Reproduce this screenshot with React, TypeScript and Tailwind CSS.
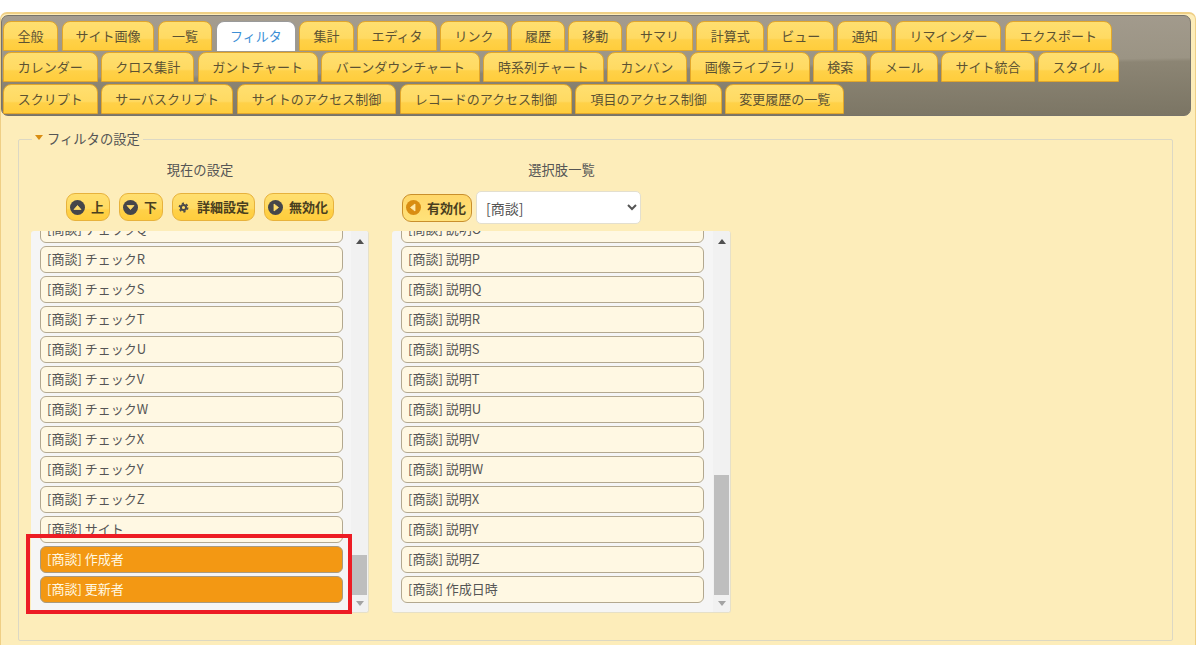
const rows = [
  [
    { label: "全般", w: "w-[55.7px]" },
    { label: "サイト画像", w: "w-[92.7px]" },
    { label: "一覧", w: "w-[54.7px]" },
    { label: "フィルタ", w: "w-[80.4px]" },
    { label: "集計", w: "w-[54.3px]" },
    { label: "エディタ", w: "w-[80px]" },
    { label: "リンク", w: "w-[67.7px]" },
    { label: "履歴", w: "w-[53.7px]" },
    { label: "移動", w: "w-[54.3px]" },
    { label: "サマリ", w: "w-[67.4px]" },
    { label: "計算式", w: "w-[67.7px]" },
    { label: "ビュー", w: "w-[66.7px]" },
    { label: "通知", w: "w-[54.7px]" },
    { label: "リマインダー", w: "w-[106px]" },
    { label: "エクスポート", w: "w-[107px]" },
  ],
  [
    { label: "カレンダー", w: "w-[95px]" },
    { label: "クロス集計", w: "w-[93.4px]" },
    { label: "ガントチャート", w: "w-[120px]" },
    { label: "バーンダウンチャート", w: "w-[159px]" },
    { label: "時系列チャート", w: "w-[120.3px]" },
    { label: "カンバン", w: "w-[80px]" },
    { label: "画像ライブラリ", w: "w-[120px]" },
    { label: "検索", w: "w-[53.7px]" },
    { label: "メール", w: "w-[67.7px]" },
    { label: "サイト統合", w: "w-[93.4px]" },
    { label: "スタイル", w: "w-[80.6px]" },
  ],
  [
    { label: "スクリプト", w: "w-[95px]" },
    { label: "サーバスクリプト", w: "w-[132.4px]" },
    { label: "サイトのアクセス制御", w: "w-[159.7px]" },
    { label: "レコードのアクセス制御", w: "w-[172.4px]" },
    { label: "項目のアクセス制御", w: "w-[146.7px]" },
    { label: "変更履歴の一覧", w: "w-[119px]" },
  ],
];

const leftItems = ["チェックQ", "チェックR", "チェックS", "チェックT", "チェックU", "チェックV", "チェックW", "チェックX", "チェックY", "チェックZ", "サイト", "作成者", "更新者"];
const rightItems = ["説明O", "説明P", "説明Q", "説明R", "説明S", "説明T", "説明U", "説明V", "説明W", "説明X", "説明Y", "説明Z", "作成日時"];

function Tab({ label, w }: { label: string; w: string }) {
  if (label === "フィルタ") {
    return (
      <div className={`${w} h-[30px] shrink-0 rounded-t-[8px] border border-b-0 border-[#9a9a9a] bg-white pt-[5px] text-center text-[#3d8fd6]`}>
        {label}
      </div>
    );
  }
  return (
    <div className={`${w} h-[30px] shrink-0 rounded-t-[8px] border border-[#e2a72a] bg-[linear-gradient(#ffdf70_0%,#ffda62_58%,#ffd148_64%,#ffcd3c_100%)] pt-[5px] text-center text-[#5c5232]`}>
      {label}
    </div>
  );
}

function CircleIcon({ dir, active }: { dir: "up" | "down" | "right" | "left"; active?: boolean }) {
  const points = {
    up: "4,9.5 11,9.5 7.5,5.5",
    down: "4,5.5 11,5.5 7.5,9.5",
    right: "6,4 6,11 10.5,7.5",
    left: "9,4 9,11 4.5,7.5",
  }[dir];
  return (
    <svg width="15" height="15" viewBox="0 0 15 15" className="shrink-0">
      <circle cx="7.5" cy="7.5" r="7.5" fill={active ? "#d98d12" : "#45464a"} />
      <polygon points={points} fill={active ? "#ffe9a8" : "#ffdc6a"} stroke={active ? "#ffe9a8" : "#ffdc6a"} strokeWidth="0.8" strokeLinejoin="round" />
    </svg>
  );
}

function GearIcon() {
  return (
    <svg width="15" height="15" viewBox="0 0 15 15" className="shrink-0">
      <circle cx="7.5" cy="7.5" r="2.6" fill="none" stroke="#4a4a4a" strokeWidth="2" />
      <circle cx="7.5" cy="7.5" r="4.2" fill="none" stroke="#4a4a4a" strokeWidth="1.5" strokeDasharray="2.2 2.2" />
    </svg>
  );
}

function ActionButton({ icon, label, active }: { icon: React.ReactNode; label: string; active?: boolean }) {
  return (
    <button
      className={`flex h-[28px] items-center gap-[6px] rounded-[9px] border-[1.5px] pr-[5px] pl-[3px] text-[13px] font-bold text-[#4a3f1e] ${
        active
          ? "border-[#c98f2c] bg-[linear-gradient(#ffd76a,#ffe27a)]"
          : "border-[#e7b23c] bg-[linear-gradient(#ffdf70_0%,#ffda62_55%,#ffd148_62%,#ffcd3c_100%)]"
      }`}
    >
      {icon}
      {label}
    </button>
  );
}

function Item({ label, selected }: { label: string; selected?: boolean }) {
  return (
    <div
      className={`flex h-[27px] w-[303px] shrink-0 items-center rounded-[6px] border-[1.5px] px-[6px] pb-[1px] text-[13px] ${
        selected
          ? "border-[#a89a80] bg-[#f39813] text-[#fff8e3]"
          : "border-[#b3a88f] bg-[#fff8e3] text-[#555555]"
      }`}
    >
      [商談] {label}
    </div>
  );
}

function ScrollList({ items, selected, width, thumbTop, thumbHeight }: { items: string[]; selected: string[]; width: string; thumbTop: string; thumbHeight: string }) {
  return (
    <div className={`flex h-[382px] ${width} overflow-hidden rounded-[3px] border-r border-b border-[#e6e0c8] bg-[#f5f5f5]`}>
      <div className="mt-[-15px] flex flex-1 flex-col gap-[3px] pl-[9px]">
        {items.map((item) => (
          <Item key={item} label={item} selected={selected.includes(item)} />
        ))}
      </div>
      <div className="flex w-[17px] flex-col items-center bg-[#f1f1f1]">
        <div className="mt-[8px] h-0 w-0 border-x-[4px] border-b-[5px] border-x-transparent border-b-[#505050]" />
        <div className={`w-[15px] bg-[#bebebe] ${thumbTop} ${thumbHeight}`} />
        <div className="mt-[6px] h-0 w-0 border-x-[4px] border-t-[5px] border-x-transparent border-t-[#a3a3a3]" />
      </div>
    </div>
  );
}

export default function App() {
  return (
    <div className="h-[645px] overflow-hidden bg-white pt-[12px] font-['Noto_Sans_CJK_JP','Noto_Sans',sans-serif] text-[13px] leading-[18px] text-[#555555]">
      <div className="h-[640px] w-[1196px] rounded-t-[7px] border-x border-t-2 border-[#efcf85] bg-[#fdedba] pt-[1px] pr-[4px]">
        <div className="h-[101px] rounded-[7px] border border-[#77736a] bg-[linear-gradient(179deg,#a59d90_0%,#9b9484_52%,#8c8574_55%,#7b7564_100%)] pt-[5px] pl-[0.7px]">
          <div className="flex flex-col gap-[1.3px]">
            {rows.map((row) => (
              <div key={row[0].label} className="flex gap-[3.3px]">
                {row.map((tab) => (
                  <Tab key={tab.label} label={tab.label} w={tab.w} />
                ))}
              </div>
            ))}
          </div>
        </div>

        <fieldset className="mt-[14px] ml-[17px] h-[511px] w-[1155px] rounded-[2px] border-[1.5px] border-[#dcd8c4] px-[12px]">
          <legend className="ml-[1px] flex items-center gap-[4px] px-[3px] text-[13.3px]">
            <span className="mb-[4px] h-0 w-0 border-x-[4.5px] border-t-[5px] border-x-transparent border-t-[#d98d12]" />
            フィルタの設定
          </legend>
          <div className="flex gap-[23px]">
            <div className="w-[338px]">
              <div className="mt-[13px] text-center text-[13.3px]">現在の設定</div>
              <div className="mt-[14px] flex h-[29px] justify-center gap-[9px]">
                <ActionButton icon={<CircleIcon dir="up" />} label="上" />
                <ActionButton icon={<CircleIcon dir="down" />} label="下" />
                <ActionButton icon={<GearIcon />} label="詳細設定" />
                <ActionButton icon={<CircleIcon dir="right" />} label="無効化" />
              </div>
              <div className="relative mt-[9px]">
                <ScrollList items={leftItems} selected={["作成者", "更新者"]} width="w-[338px]" thumbTop="mt-[311px]" thumbHeight="h-[40px]" />
                <div className="absolute top-[303px] left-[-5px] h-[80px] w-[326px] border-4 border-[#ed1c24]" />
              </div>
            </div>
            <div className="w-[339px]">
              <div className="mt-[13px] text-center text-[13.3px]">選択肢一覧</div>
              <div className="mt-[12px] flex h-[33px] items-center gap-[4px] pl-[10px]">
                <ActionButton icon={<CircleIcon dir="left" active />} label="有効化" active />
                <select className="h-[33px] w-[165px] rounded-[5px] border border-[#e3dfcf] bg-white pl-[5px] text-[14px] text-[#555555]">
                  <option>[商談]</option>
                </select>
              </div>
              <div className="mt-[7px]">
                <ScrollList items={rightItems} selected={[]} width="w-[339px]" thumbTop="mt-[231px]" thumbHeight="h-[120px]" />
              </div>
            </div>
          </div>
        </fieldset>
      </div>
    </div>
  );
}
